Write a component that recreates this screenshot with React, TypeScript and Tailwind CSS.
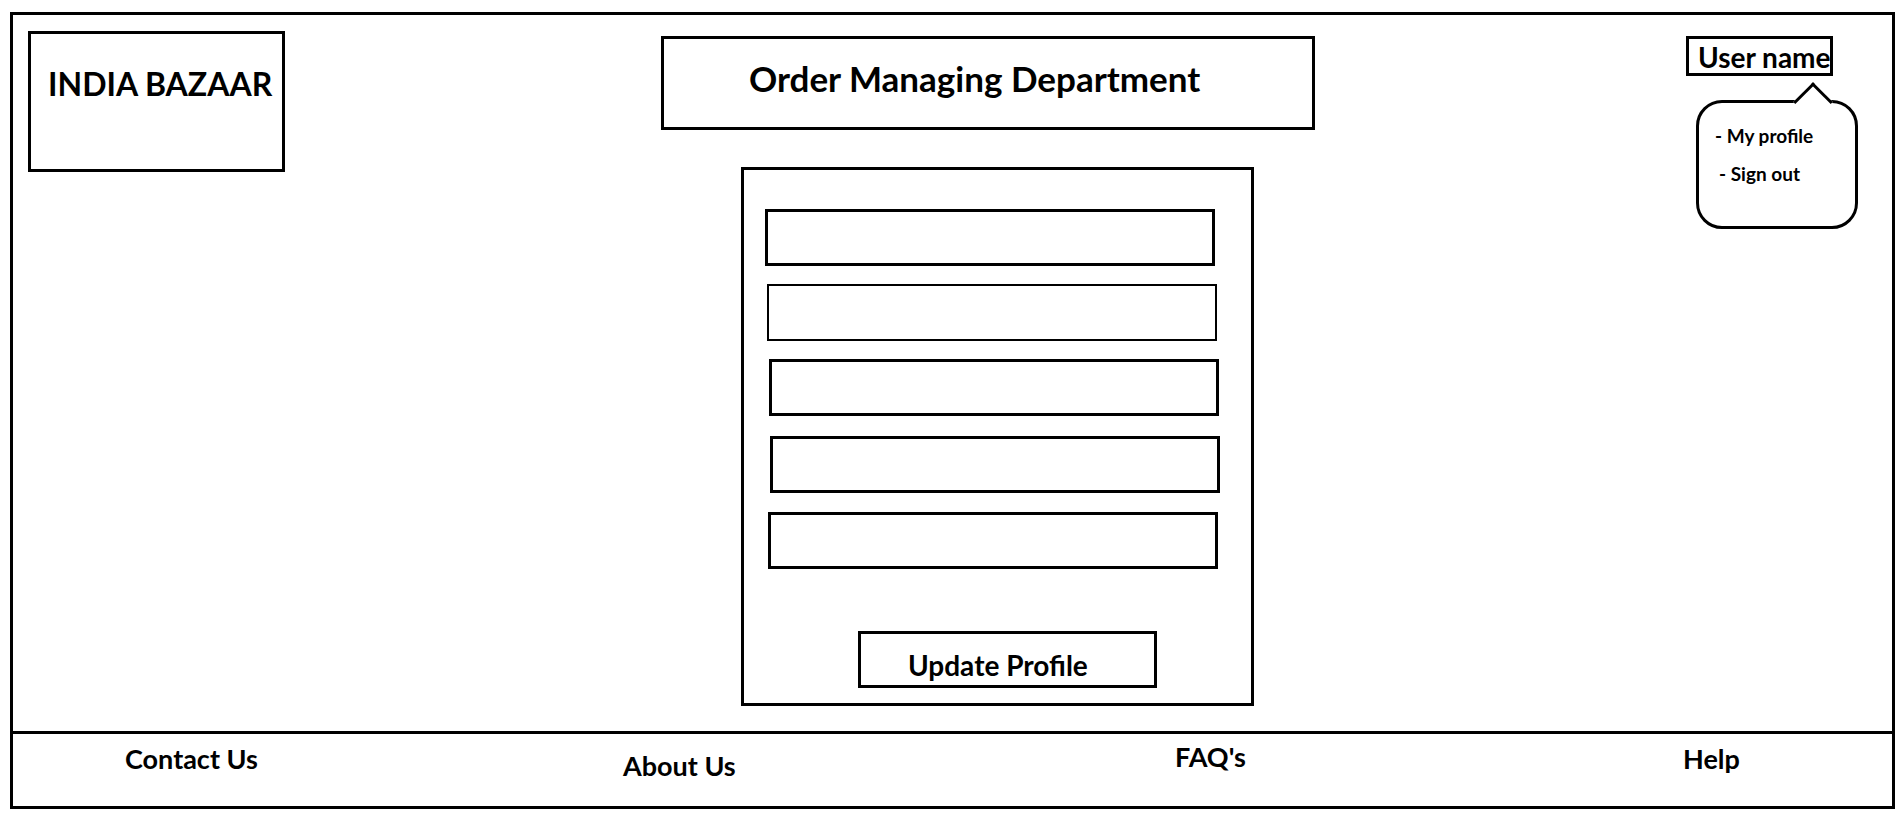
import React from 'react';

const fields = [
  { ml: 'ml-[21px]', mt: 'mt-[39px]', border: 'border-[3px]' },
  { ml: 'ml-[23px]', mt: 'mt-[18px]', border: 'border-2' },
  { ml: 'ml-[25px]', mt: 'mt-[18px]', border: 'border-[3px]' },
  { ml: 'ml-[26px]', mt: 'mt-[20px]', border: 'border-[3px]' },
  { ml: 'ml-[24px]', mt: 'mt-[19px]', border: 'border-[3px]' },
];

function UserMenu() {
  return (
    <div className="relative ml-[371px] mt-[21px]">
      <div className="w-[147px] h-[40px] border-[3px] border-black pl-[9px] pt-[4px] text-[28px] leading-none font-bold whitespace-nowrap">
        User name
      </div>
      {/* dropdown bubble */}
      <div className="absolute left-[10px] top-[64px] w-[162px] h-[129px] border-[3px] border-black rounded-[26px] bg-white pl-[16px] pt-[23px] text-[19px] leading-none font-bold">
        <div className="whitespace-nowrap">- My profile</div>
        <div className="mt-[19px] ml-[4px] whitespace-nowrap">- Sign out</div>
      </div>
      <div className="absolute left-[113px] top-[52px] w-[28px] h-[28px] rotate-45 border-t-[3px] border-l-[3px] border-black bg-white" />
    </div>
  );
}

export default function App() {
  return (
    <div className="min-h-screen bg-white text-black font-[Lato,sans-serif] pt-[12px] pl-[10px]">
      <div className="w-[1885px] h-[797px] border-[3px] border-black flex flex-col">
        <div className="h-[716px] flex items-start">
          <div className="ml-[15px] mt-[16px] w-[257px] h-[141px] border-[3px] border-black pl-[17px] pt-[34px] text-[32px] leading-none font-bold whitespace-nowrap">
            INDIA BAZAAR
          </div>

          <div className="ml-[376px] mt-[21px] flex flex-col">
            <div className="w-[654px] h-[94px] border-[3px] border-black pl-[85px] pt-[22px] text-[35px] leading-none font-bold whitespace-nowrap">
              Order Managing Department
            </div>

            <div className="ml-[80px] mt-[37px] w-[513px] h-[539px] border-[3px] border-black flex flex-col items-start">
              {fields.map((f, i) => (
                <div key={i} className={`${f.ml} ${f.mt} ${f.border} w-[450px] h-[57px] border-black`} />
              ))}
              <button className="ml-[114px] mt-[62px] w-[299px] h-[57px] border-[3px] border-black pl-[47px] pt-[10px] text-left text-[28px] leading-none font-bold whitespace-nowrap">
                Update Profile
              </button>
            </div>
          </div>

          <UserMenu />
        </div>

        <div className="flex-1 border-t-[3px] border-black flex items-start pl-[112px] text-[27px] leading-none font-bold">
          <div className="w-[498px] mt-[11px]">Contact Us</div>
          <div className="w-[552px] mt-[18px]">About Us</div>
          <div className="w-[508px] mt-[9px]">FAQ's</div>
          <div className="mt-[11px]">Help</div>
        </div>
      </div>
    </div>
  );
}
